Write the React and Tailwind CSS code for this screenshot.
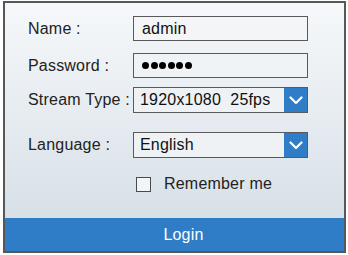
import React from "react";

const Chevron = () => (
  <svg width="14" height="9" viewBox="0 0 14 9" fill="none">
    <path d="M1.5 1.5 L7 7 L12.5 1.5" stroke="white" strokeWidth="2.2" strokeLinecap="round" strokeLinejoin="round" />
  </svg>
);

const Field = ({ label, top, children }) => (
  <div className="flex items-center" style={{ marginTop: top }}>
    <div className="w-[128px] shrink-0 whitespace-nowrap pl-[23px] text-[16px] tracking-[0.2px] text-[#222]">{label}</div>
    {children}
  </div>
);

const Select = ({ value }) => (
  <div className="flex h-[26px] w-[175px] shrink-0 border border-[#5a5a5a] bg-[#eef2f5]">
    <div className="flex-1 whitespace-pre pl-[6px] text-[16px] leading-[24px] tracking-[0.2px] text-[#111]">{value}</div>
    <div className="flex w-[23px] items-center justify-center bg-[#2f7dc6]">
      <Chevron />
    </div>
  </div>
);

export default function App() {
  return (
    <div className="h-[255px] w-[348px] bg-white font-['Liberation_Sans',Arial,sans-serif]">
      <div className="ml-[3px] mt-[1px] flex h-[252px] w-[343px] flex-col border-2 border-[#575757] bg-gradient-to-b from-[#f6f8fa] to-[#d3dde5]">
        <Field label="Name :" top={13}>
          <div className="h-[25px] w-[175px] shrink-0 border border-[#5a5a5a] bg-[#f3f5f7] pl-[8px] text-[16px] leading-[23px] tracking-[0.2px] text-[#111]">
            admin
          </div>
        </Field>
        <Field label="Password :" top={12}>
          <div className="flex h-[25px] w-[175px] shrink-0 items-center gap-[1.5px] border border-[#5a5a5a] bg-[#f0f3f5] pl-[8px]">
            {[0, 1, 2, 3, 4, 5].map((i) => (
              <span key={i} className="h-[7px] w-[7px] rounded-full bg-black" />
            ))}
          </div>
        </Field>
        <Field label="Stream Type :" top={9}>
          <Select value={"1920x1080  25fps"} />
        </Field>
        <Field label="Language :" top={19}>
          <Select value="English" />
        </Field>
        <div className="mt-[14px] flex items-center pl-[131px]">
          <span className="h-[15px] w-[15px] border-[1.5px] border-[#4a4a4a] bg-[#f2f5f7]" />
          <span className="ml-[13px] text-[16px] tracking-[0.2px] text-[#222]">Remember me</span>
        </div>
        <div className="mt-auto flex h-[33px] items-center justify-center bg-[#2f7dc6] pl-[18px] text-[16px] tracking-[0.2px] text-white">
          Login
        </div>
      </div>
    </div>
  );
}
